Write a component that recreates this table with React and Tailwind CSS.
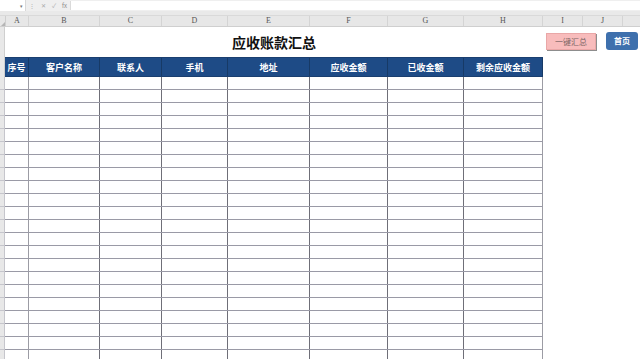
import React from "react";

const colW = [24, 71, 62, 66, 82, 78, 76, 79];
const heads = ["序号", "客户名称", "联系人", "手机", "地址", "应收金额", "已收金额", "剩余应收金额"];
const letters = [
  ["A", 23],
  ["B", 71],
  ["C", 62],
  ["D", 66],
  ["E", 82],
  ["F", 78],
  ["G", 76],
  ["H", 79],
  ["I", 40],
  ["J", 40],
  ["", 40],
];

const font = { fontFamily: '"Noto Sans CJK SC", "Noto Sans", sans-serif' };

export default function App() {
  const rows = Array.from({ length: 22 });
  return (
    <div className="w-[640px] h-[359px] overflow-hidden bg-white flex flex-col" style={font}>
      {/* formula bar */}
      <div className="h-[11px] flex items-stretch bg-[#efefef] shrink-0">
        <div className="w-[26px] shrink-0 bg-white border-r border-[#d8d8d8] flex items-center justify-end pr-[2px] text-[5px] text-[#777]">▾</div>
        <div className="w-[44px] shrink-0 flex items-center gap-[6px] pl-[3px] text-[6px] text-[#aaa]">
          <span>⋮</span>
          <span>✕</span>
          <span>✓</span>
          <span className="text-[#888]">fx</span>
        </div>
        <div className="flex-1 bg-white mt-[1px] mb-[1px] border-l border-[#dadada]" />
      </div>
      <div className="h-[5px] bg-[#e9e9e9] shrink-0 border-b border-[#d9d9d9]" />
      {/* column headers */}
      <div className="h-[11px] flex shrink-0 bg-[#e7e7e7] border-b border-[#cfcfcf]">
        <div className="w-[6px] shrink-0 border-r border-[#cfcfcf] relative">
          <div className="absolute right-0 bottom-0 w-0 h-0 border-l-[4px] border-l-transparent border-b-[4px] border-b-[#b5b5b5]" />
        </div>
        {letters.map(([l, w], i) => (
          <div
            key={i}
            style={{ width: w }}
            className="shrink-0 border-r border-[#d4d4d4] flex items-center justify-center text-[8px] leading-none text-[#555] font-['Liberation_Serif',serif]"
          >
            {l}
          </div>
        ))}
      </div>
      {/* title row */}
      <div className="h-[30px] flex shrink-0">
        <div className="w-[5px] bg-[#e8e8e8] border-r border-[#cfcfcf] shrink-0" />
        <div className="w-[538px] flex items-center justify-center shrink-0">
          <span className="text-[14px] font-bold text-[#111] leading-none">应收账款汇总</span>
        </div>
        <div className="flex items-start pt-[6px] gap-[10px] ml-[3px]">
          <div className="w-[50px] h-[17px] bg-[#f8bcbc] border border-[#e9a7a7] shadow-[1px_1px_0_#8d8d8d] flex items-center justify-center text-[8px] text-[#7a6464]">
            一键汇总
          </div>
          <div className="w-[32px] h-[18px] -mt-[1px] rounded-[3px] bg-[#3e70ad] flex items-center justify-center text-[8px] font-bold text-white">
            首页
          </div>
        </div>
      </div>
      {/* table header */}
      <div className="h-[20px] flex shrink-0">
        <div className="w-[5px] bg-[#e8e8e8] border-r border-[#cfcfcf] shrink-0" />
        <div className="flex bg-[#1e4b86] border-y border-[#1a3f70]">
          {heads.map((h, i) => (
            <div
              key={i}
              style={{ width: colW[i] }}
              className="shrink-0 flex items-center justify-center text-[9px] font-bold text-white border-r border-[#173a66] leading-none"
            >
              {h}
            </div>
          ))}
        </div>
      </div>
      {/* data rows */}
      {rows.map((_, r) => (
        <div key={r} className="h-[13px] flex shrink-0">
          <div className="w-[5px] bg-[#e8e8e8] border-r border-b border-[#c6c6cc] shrink-0" />
          <div className="flex border-b border-[#9a9aa6]">
            {colW.map((w, i) => (
              <div
                key={i}
                style={{ width: w }}
                className={`shrink-0 border-r ${i === 0 || i === 7 ? "border-[#9c9ca4]" : "border-[#6f6f78]"}`}
              />
            ))}
          </div>
        </div>
      ))}
    </div>
  );
}
